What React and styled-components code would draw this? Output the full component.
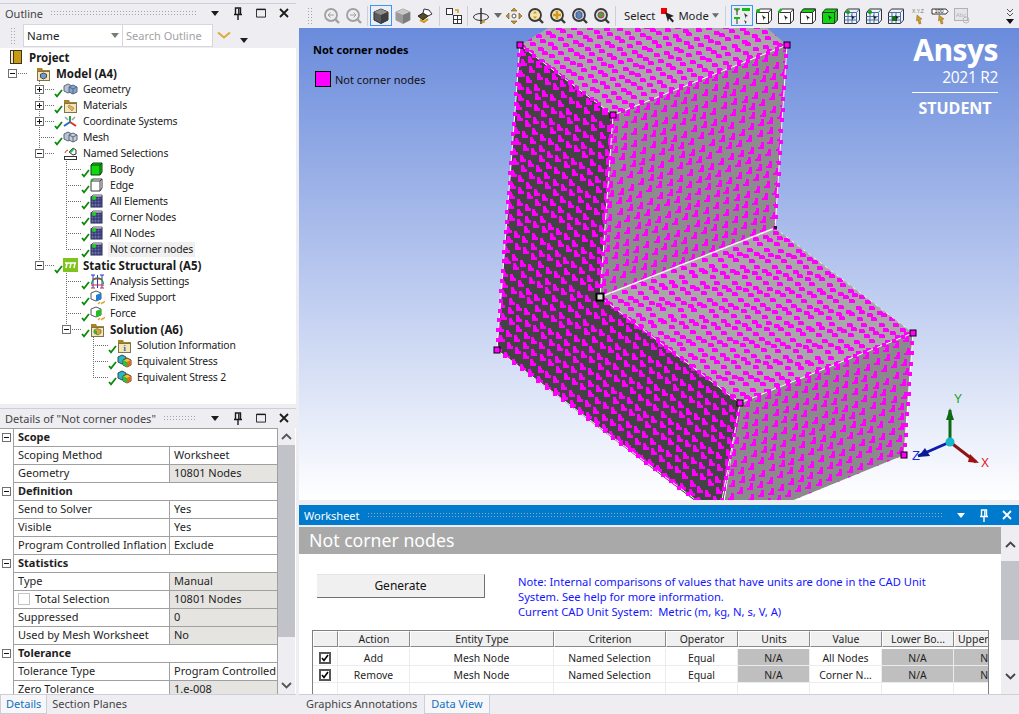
import styled, { createGlobalStyle } from 'styled-components';

const GlobalStyle = createGlobalStyle`
  html, body { margin: 0; padding: 0; background: #eeeef2; }
  body { font-family: "Noto Sans", "Liberation Sans", sans-serif; font-size: 11px; color: #1e1e1e; overflow: hidden; }
  * { box-sizing: border-box; }
`;

/* ---------- small icons ---------- */
const Check = () => (
  <svg width="9" height="9" viewBox="0 0 9 9"><path d="M1 5l2 2.4L8 1" fill="none" stroke="#0a8a0a" strokeWidth="1.800" /></svg>
);
const Twin = ({ tint = '#7da7d9' }) => (
  <svg width="15" height="14" viewBox="0 0 15 14">
    <path d="M1 4l4-2 4 2v5l-4 2-4-2z" fill="#b6c4d8" stroke="#5c6675" />
    <path d="M6 5l4-2 4 2v5l-4 2-4-2z" fill={tint} stroke="#5c6675" />
    <path d="M6 5l4 2 4-2M10 7v5" fill="none" stroke="#5c6675" />
  </svg>
);
const Folder = ({ children }) => (
  <svg width="15" height="15" viewBox="0 0 15 15">
    <path d="M1 2h5l1 2h7v2H1z" fill="#a9841f" />
    <rect x="1.500" y="5.500" width="12" height="9" fill="#f2e7b5" stroke="#7d7350" />
    {children}
  </svg>
);
const MeshCube = ({ dot = '#1bd41b' }) => (
  <svg width="13" height="14" viewBox="0 0 13 14">
    <rect x="1" y="3" width="11" height="10" fill="#6a6fb5" stroke="#23244f" />
    <path d="M1 3l2-2h9v2M4 3v10M7 3v10M10 3v10M1 6h11M1 9h11" fill="none" stroke="#23244f" strokeWidth=".8" />
    <circle cx="4" cy="4" r="2" fill={dot} />
  </svg>
);
const BodyIcon = () => (
  <svg width="13" height="14" viewBox="0 0 13 14">
    <path d="M1 3l2-2h9v9l-2 3H1z" fill="#10d810" stroke="#0d400d" /><path d="M1 3h9v10M10 3l2-2" fill="none" stroke="#0d400d" />
  </svg>
);
const EdgeIcon = () => (
  <svg width="13" height="14" viewBox="0 0 13 14">
    <path d="M1 3l2-2h9v9l-2 3H1z" fill="#fff" stroke="#3c3c3c" /><path d="M1 3h9v10M10 3l2-2" fill="none" stroke="#3c3c3c" />
    <path d="M1 3l2-2" stroke="#0db80d" strokeWidth="2" />
  </svg>
);
const ProjectIcon = () => (
  <svg width="14" height="15" viewBox="0 0 14 15">
    <rect x="1.500" y=".5" width="11" height="13" fill="#c99a10" stroke="#3c3320" /><rect x="1.500" y=".5" width="3" height="13" fill="#f4e8c2" stroke="#3c3320" />
  </svg>
);
const CsysIcon = () => (
  <svg width="14" height="15" viewBox="0 0 14 15">
    <path d="M7 8V2" stroke="#18a34a" strokeWidth="2" /><path d="M7 8L1 12" stroke="#2468c8" strokeWidth="2" /><path d="M7 8l6 4" stroke="#d8322a" strokeWidth="2" />
    <path d="M2 3l3 3M12 3L9 6" stroke="#9aa0a8" strokeWidth="1.500" />
  </svg>
);
const NamedIcon = () => (
  <svg width="15" height="15" viewBox="0 0 15 15">
    <path d="M6 6l4-4 3 2v4l-3 1z" fill="#fff" stroke="#333" /><path d="M6 6l4-4 1 2-3 3z" fill="#2fb84a" />
    <path d="M2 7a4 4 0 0 1 3-3" fill="none" stroke="#d32" />
    <rect x="1.500" y="10.500" width="12" height="3" fill="#fff" stroke="#333" />
  </svg>
);
const StaticIcon = () => (
  <svg width="15" height="14" viewBox="0 0 15 14">
    <rect width="15" height="14" fill="#7fc41c" /><path d="M2 5h11M4 5L3 10M8 5L7 10M12 5l-1 5" stroke="#fff" strokeWidth="1.500" fill="none" />
  </svg>
);
const AnalysisIcon = () => (
  <svg width="15" height="15" viewBox="0 0 15 15">
    <path d="M1 1h4M10 1h4M3 1v13M12 1v13M7.500 1v13" stroke="#2232d8" fill="none" />
    <path d="M1.500 10a6 6 0 0 1 12 0" stroke="#15a030" fill="none" strokeWidth="1.300" />
    <path d="M3 5h9M1 11h13M1 14h4M10 14h4" stroke="#d02828" fill="none" />
  </svg>
);
const SupportIcon = ({ face = '#1b7fe0', foot = '#d8ac3c' }) => (
  <svg width="15" height="15" viewBox="0 0 15 15">
    <path d="M6 1l5 2v6l-5 2-5-2V3z" fill="#fff" stroke="#555" /><path d="M6 5l5-2v6l-5 2z" fill={face} />
    <path d="M8 14l2-2M11 14l2-2M13 13l2-2" stroke={foot} strokeWidth="1.500" />
  </svg>
);
const StressIcon = () => (
  <svg width="15" height="14" viewBox="0 0 15 14">
    <path d="M1 3l4-2 4 2v5l-4 2-4-2z" fill="#28b8c8" stroke="#444" />
    <path d="M6 6l4-2 4 2v5l-4 2-4-2z" fill="#e8c818" stroke="#444" />
    <path d="M6 6l4 2v5l-4-2z" fill="#28c040" /><path d="M10 8l4-2v5l-4 2z" fill="#e86a18" />
  </svg>
);

const ICONS = {
  project: <ProjectIcon />,
  model: <Folder><path d="M7.500 7l3 1.300v3L7.500 13l-3-1.700v-3z" fill="#6d9bd2" stroke="#445" /></Folder>,
  geometry: <Twin />,
  materials: <Folder><path d="M6 7l5 3-2 3-4-4z" fill="#e2b27a" stroke="#a5763c" strokeWidth=".6" /></Folder>,
  csys: <CsysIcon />,
  mesh: <Twin tint="#c4cfde" />,
  named: <NamedIcon />,
  body: <BodyIcon />,
  edge: <EdgeIcon />,
  elements: <MeshCube />,
  nodes: <MeshCube />,
  static: <StaticIcon />,
  analysis: <AnalysisIcon />,
  support: <SupportIcon />,
  force: <SupportIcon face="#20c020" />,
  solution: <Folder><path d="M4 8l3-1.500L11 8v3l-3 2-4-2z" fill="#e3a528" stroke="#555" strokeWidth=".6" /><path d="M4 8l3 1v4l-3-2z" fill="#2bb04a" /></Folder>,
  info: <Folder><text x="7.500" y="13" fontSize="8" fontWeight="700" fill="#2a56c8" textAnchor="middle" fontFamily="Liberation Serif">i</text></Folder>,
  stress: <StressIcon />,
};

const Pin = () => (
  <svg width="10" height="13" viewBox="0 0 10 13"><path d="M2.500 1h5v6.500h-5zM1 7.500h8M5 8v5" fill="none" stroke="currentColor" strokeWidth="1.400" /><path d="M5.800 1.500v6" stroke="currentColor" strokeWidth="1.400" /></svg>
);
const CloseX = () => (
  <svg width="10" height="10" viewBox="0 0 10 10"><path d="M1 1l8 8M9 1l-8 8" stroke="currentColor" strokeWidth="1.800" /></svg>
);
const MaxBox = () => (
  <svg width="11" height="10" viewBox="0 0 11 10"><path d="M.5 1.200h10v8.300H.5z" fill="none" stroke="currentColor" /><path d="M.5 1h10" stroke="currentColor" strokeWidth="1.600" /></svg>
);
const DownTri = () => (
  <svg width="8" height="5" viewBox="0 0 8 5"><path d="M0 0h8L4 5z" fill="currentColor" /></svg>
);

/* ---------- toolbar icons ---------- */
const Glass = ({ ring = '#3a3a3a', fill = '#eef0f0', children }) => (
  <svg width="18" height="18" viewBox="0 0 18 18">
    <circle cx="8" cy="8" r="6" fill={fill} stroke={ring} strokeWidth="1.800" />
    <path d="M12.500 12.500L16 16" stroke={ring} strokeWidth="2.400" />
    {children}
  </svg>
);
const ShadedBox = ({ top = '#8f8f8f', left = '#5a5a5a', right = '#3f3f3f', stroke = '#2a2a2a' }) => (
  <svg width="18" height="18" viewBox="0 0 18 18">
    <path d="M9 2l7 3v8l-7 3.500L2 13V5z" fill={left} stroke={stroke} />
    <path d="M9 2l7 3-7 3-7-3z" fill={top} />
    <path d="M9 8l7-3v8l-7 3.500z" fill={right} />
  </svg>
);
const SelectCube = ({ mode }) => (
  <svg width="18" height="18" viewBox="0 0 18 18">
    <path d="M1.500 5.500l3-3.500h12v11l-3 3.500h-12z" fill={mode === 'body' ? '#10d810' : '#fff'} stroke="#333" />
    <path d="M1.500 5.500h12v11M13.500 5.500l3-3.500" fill="none" stroke="#333" />
    {mode === 'vertex' && <circle cx="3" cy="4" r="2" fill="#10b810" />}
    {mode === 'edge' && <path d="M1.500 5.500l3-3.500" stroke="#10b810" strokeWidth="2.500" />}
    {mode === 'face' && <path d="M1.500 5.500l3-3.500h12l-3 3.500z" fill="#10d810" stroke="#333" />}
    <path d="M7 8l4 3-2 .4L9 14z" fill="#222" />
  </svg>
);
const MeshSelect = ({ heavy }) => (
  <svg width="18" height="18" viewBox="0 0 18 18">
    <path d="M1.500 5.500l3-3.500h12v11l-3 3.500h-12z" fill="#eef2fa" stroke="#333" />
    <path d="M1.500 5.500h12v11M13.500 5.500l3-3.500M5 5.500v11M9 5.500v11M1.500 9.500h12M1.500 13h12" fill="none" stroke="#4a70a8" />
    {heavy ? <rect x="5" y="9" width="5" height="5" fill="#157015" /> : <circle cx="5" cy="5" r="2" fill="#15a015" />}
    <path d="M8 8l4 3-2 .4L10 14z" fill="#222" />
  </svg>
);

const Toolbar = styled.div`
  height: 25px;
  display: flex;
  align-items: center;
  background: #eeeef2;
  padding-left: 8px;
`;
const Grip = styled.span`
  width: ${p => p.$w || 6}px;
  height: ${p => p.$h || 18}px;
  flex: ${p => (p.$grow ? 1 : 'none')};
  background-image: radial-gradient(#a4a4ae 0.7px, transparent 0.8px);
  background-size: 3px 3px;
`;
const ToolSpacer = styled.span`
  width: 8px;
  flex: none;
`;
const ToolButton = styled.span`
  width: ${p => p.$w || 22}px;
  height: 21px;
  flex: none;
  display: flex;
  align-items: center;
  justify-content: center;
  border: 1px solid ${p => (p.$active ? '#3399ff' : 'transparent')};
  opacity: ${p => (p.$dim ? 0.5 : 1)};
  color: #6a6a6a;
`;
const ToolSep = styled.span`
  width: 1px;
  height: 20px;
  flex: none;
  background: #ccced8;
  margin: 0 ${p => p.$m ?? 3}px;
`;
const ToolText = styled.span`
  font-size: 11.300px;
  color: #1e1e1e;
  padding: 0 ${p => p.$pad ?? 4}px 1px;
`;
const Overflow = styled.span`
  margin-left: auto;
  margin-right: 5px;
  display: flex;
  flex-direction: column;
  align-items: center;
  gap: 2px;
  color: #111;
`;

/* ---------- layout ---------- */
const Shell = styled.div`
  width: 1019px;
  height: 714px;
  padding-top: 3px;
  display: grid;
  grid-template-columns: 299px 720px;
  overflow: hidden;
`;
const LeftColumn = styled.div`
  display: flex;
  flex-direction: column;
  padding-right: 3px;
  min-height: 0;
`;
const RightColumn = styled.div`
  display: flex;
  flex-direction: column;
  min-height: 0;
`;
const PanelHead = styled.div`
  height: ${p => p.$h || 20}px;
  flex: none;
  display: flex;
  align-items: center;
  gap: 7px;
  padding: 0 7px 1px 5px;
  font-size: 11px;
  color: ${p => (p.$blue ? '#fff' : '#444')};
  background: ${p => (p.$blue ? '#007acc' : '#eeeef2')};
  border-top: 1px solid ${p => (p.$blue ? '#007acc' : '#ccced8')};
`;
const HeadTool = styled.span`
  display: flex;
  width: 10px;
  justify-content: center;
  margin-left: 6px;
  color: ${p => (p.$blue ? '#fff' : '#1b1b1b')};
`;
const OutlinePanel = styled.section`
  height: 401px;
  flex: none;
  display: flex;
  flex-direction: column;
`;
const SearchRow = styled.div`
  height: 25px;
  flex: none;
  display: flex;
  align-items: center;
  padding-left: 10px;
`;
const NameCombo = styled.div`
  width: 100px;
  height: 23px;
  margin-left: 7px;
  display: flex;
  align-items: center;
  justify-content: space-between;
  padding: 0 3px;
  font-size: 11.500px;
  background: #fff;
  border: 1px solid #d6d6dc;
  color: #1e1e1e;
  & > svg { color: #7a7a7a; }
`;
const SearchBox = styled.div`
  width: 90px;
  height: 23px;
  display: flex;
  align-items: center;
  padding-left: 3px;
  font-size: 11px;
  background: #fff;
  border: 1px solid #d6d6dc;
  border-left: 0;
  color: #a2a2a2;
  white-space: nowrap;
`;
const Chevron = styled.span`
  display: flex;
  margin-left: 4px;
  margin-right: 9px;
`;
const MenuTri = styled.span`
  display: flex;
  margin-top: 10px;
`;
const TreeBox = styled.div`
  flex: 1;
  background: #fff;
  padding-top: 1px;
  overflow: hidden;
`;
const Row = styled.div`
  height: 16px;
  display: flex;
  align-items: center;
`;
const dots = 'repeating-linear-gradient';
const Guide = styled.span`
  width: 27px;
  height: 16px;
  flex: none;
  position: relative;
  &::before {
    content: '';
    display: ${p => (p.$kind === 'T' || p.$kind === '|' || p.$kind === 'L' ? 'block' : 'none')};
    position: absolute;
    left: 12px;
    top: 0;
    width: 1px;
    height: ${p => (p.$kind === 'L' ? 8 : 16)}px;
    background: ${dots}(to bottom, #6e6e6e 0 1px, transparent 1px 2px);
  }
  &::after {
    content: '';
    display: ${p => (p.$kind === 'T' || p.$kind === 'L' || p.$kind === '-' ? 'block' : 'none')};
    position: absolute;
    left: 12px;
    top: 8px;
    width: 15px;
    height: 1px;
    background: ${dots}(to right, #6e6e6e 0 1px, transparent 1px 2px);
  }
`;
const Expander = styled.span`
  position: absolute;
  z-index: 1;
  left: ${p => p.$left ?? 8}px;
  top: 4px;
  width: 9px;
  height: 9px;
  background: #fff;
  border: 1px solid #707070;
  &::before {
    content: '';
    position: absolute;
    left: 1px;
    top: 3px;
    width: 5px;
    height: 1px;
    background: #111;
  }
  &::after {
    content: '';
    display: ${p => (p.$open ? 'none' : 'block')};
    position: absolute;
    left: 3px;
    top: 1px;
    width: 1px;
    height: 5px;
    background: #111;
  }
`;
const CheckSlot = styled.span`
  width: 9px;
  height: 16px;
  flex: none;
  display: flex;
  align-items: flex-end;
  position: relative;
  top: 1px;
`;
const TreeIcon = styled.span`
  width: 15px;
  height: 16px;
  flex: none;
  display: flex;
  align-items: center;
`;
const TreeLabel = styled.span`
  margin-left: 3px;
  padding: 0 2px;
  font-size: ${p => (p.$bold ? 11.500 : 10.400)}px;
  letter-spacing: ${p => (p.$bold ? 0 : -0.15)}px;
  line-height: 15px;
  white-space: nowrap;
  font-weight: ${p => (p.$bold ? 700 : 400)};
  background: ${p => (p.$sel ? '#f0f0f0' : 'transparent')};
  color: #1a1a1a;
`;

/* ---------- details ---------- */
const DetailsPanel = styled.section`
  flex: 1;
  margin-top: 4px;
  display: flex;
  flex-direction: column;
  min-height: 0;
`;
const DetailsBody = styled.div`
  height: 266px;
  flex: none;
  display: flex;
  overflow: hidden;
  background: #fff;
`;
const DetailsTable = styled.div`
  width: 278px;
  flex: none;
  overflow: hidden;
  border-top: 1px solid #a0a0a0;
`;
const DetailRow = styled.div`
  height: 18px;
  display: flex;
  position: relative;
`;
const Gutter = styled.span`
  width: 13px;
  flex: none;
  position: relative;
  background: #fff;
`;
const Cell = styled.span`
  flex: none;
  width: ${p => p.$w}px;
  display: flex;
  align-items: center;
  gap: 5px;
  padding: 0 0 2px ${p => p.$pad ?? 4}px;
  font-size: 11px;
  white-space: nowrap;
  overflow: hidden;
  font-weight: ${p => (p.$bold ? 700 : 400)};
  background: ${p => (p.$gray ? '#e5e4e1' : '#fff')};
  border-left: 1px solid #a0a0a0;
  border-right: ${p => (p.$end ? '1px solid #a0a0a0' : '0')};
  border-bottom: 1px solid #a0a0a0;
`;
const TinyCheck = styled.span`
  width: 12px;
  height: 12px;
  flex: none;
  background: #fff;
  border: 1px solid #c4c4c4;
`;
const VScroll = styled.div`
  flex: none;
  width: ${p => p.$w}px;
  display: flex;
  flex-direction: column;
  align-items: center;
  background: #eeeef2;
`;
const ScrollBtn = styled.span`
  height: ${p => p.$h}px;
  flex: none;
  display: flex;
  align-items: center;
  justify-content: center;
`;
const ScrollTrack = styled.span`
  flex: 1;
  width: 100%;
  min-height: 0;
  display: flex;
  flex-direction: column;
`;
const ScrollThumb = styled.span`
  height: ${p => p.$h}px;
  flex: none;
  background: #c2c3c9;
`;
const TabBar = styled.div`
  height: 20px;
  flex: none;
  display: flex;
  background: #eeeef2;
  border-top: 1px solid #ccced8;
`;
const Tab = styled.span`
  display: flex;
  align-items: center;
  padding: 0 ${p => p.$x ?? 6}px 1px;
  font-size: 11px;
  color: ${p => (p.$active ? '#0e70c0' : '#444')};
  background: ${p => (p.$active ? '#f7f7f9' : 'transparent')};
  border: 1px solid ${p => (p.$active ? '#ccced8' : 'transparent')};
  border-top: 0;
`;

/* ---------- viewport ---------- */
const Viewport = styled.div`
  height: 472px;
  flex: none;
  position: relative;
  overflow: hidden;
  background: linear-gradient(#6a8bdc, #ffffff);
`;
const ModelSvg = styled.svg`
  display: block;
`;
const Legend = styled.div`
  position: absolute;
  left: 14px;
  top: 14px;
  display: flex;
  flex-direction: column;
  gap: 14px;
`;
const LegendTitle = styled.div`
  font-size: 11px;
  font-weight: 700;
  color: #000;
`;
const LegendItem = styled.div`
  display: flex;
  align-items: center;
  gap: 4px;
  font-size: 11px;
  color: #111;
  padding-left: 2px;
`;
const Swatch = styled.span`
  width: 16px;
  height: 16px;
  background: #ff00ff;
  border: 1px solid #000;
`;
const Brand = styled.div`
  position: absolute;
  right: 21px;
  top: 6px;
  width: 86px;
  color: #fff;
  display: flex;
  flex-direction: column;
  align-items: flex-end;
`;
const BrandName = styled.div`
  font-family: "Open Sans", sans-serif;
  font-weight: 700;
  font-size: 30px;
  line-height: 32px;
  letter-spacing: -.5px;
`;
const BrandYear = styled.div`
  margin-top: 1px;
  font-family: "Open Sans", sans-serif;
  font-weight: 400;
  font-size: 15.500px;
  line-height: 20px;
  letter-spacing: -.3px;
`;
const BrandLine = styled.div`
  width: 100%;
  height: 1px;
  margin: 5px 0 5px;
  background: #fff;
`;
const BrandEdition = styled.div`
  width: 100%;
  text-align: center;
  font-family: "Open Sans", sans-serif;
  font-weight: 700;
  font-size: 16px;
  line-height: 20px;
`;

/* ---------- worksheet ---------- */
const Worksheet = styled.section`
  height: 189px;
  flex: none;
  margin-top: 5px;
  display: flex;
  flex-direction: column;
`;
const WorksheetMain = styled.div`
  flex: 1;
  margin-top: 2px;
  min-height: 0;
  display: flex;
  background: #fff;
`;
const WorksheetContent = styled.div`
  width: 702px;
  flex: none;
  overflow: hidden;
`;
const SheetTitle = styled.h2`
  margin: 0;
  height: 27px;
  padding-left: 10px;
  background: #a9a9a9;
  color: #fff;
  font-weight: 400;
  font-size: 17.700px;
  line-height: 26px;
  font-family: "Noto Sans", sans-serif;
`;
const GenerateRow = styled.div`
  display: flex;
  padding: 20px 0 0 18px;
  height: 76px;
`;
const GenerateButton = styled.button`
  width: 168px;
  height: 24px;
  padding: 0 0 2px;
  background: #f0f0f0;
  border: 0;
  border-top: 1px solid #e4e4e4;
  border-right: 1px solid #707070;
  border-bottom: 1px solid #707070;
  font: 12px "Noto Sans", sans-serif;
  color: #111;
`;
const Note = styled.p`
  margin: 0 0 0 33px;
  color: #1414ff;
  font-size: 11.200px;
  line-height: 15px;
`;
const GridClip = styled.div`
  margin-left: 13px;
  width: 677px;
  overflow: hidden;
  border-top: 1px solid #7f7f7f;
  border-left: 1px solid #7f7f7f;
  border-right: 1px solid #7f7f7f;
`;
const CritGrid = styled.div`
  display: grid;
  grid-template-columns: 25px 72px 144px 112px 72px 72px 72px 72px 72px;
  grid-template-rows: 18px;
  grid-auto-rows: 17px;
  width: 713px;
  font-size: 10.400px;
`;
const HeadCell = styled.span`
  height: 16px;
  display: block;
  text-align: ${p => (p.$left ? 'left' : 'center')};
  padding-left: ${p => (p.$left ? 3 : 0)}px;
  line-height: 15px;
  white-space: nowrap;
  overflow: hidden;
  background: #f0f0f0;
  border-top: 1px solid #fff;
  border-left: 1px solid #fff;
  border-right: 1px solid #8a8a8a;
  border-bottom: 1px solid #8a8a8a;
`;
const BodyCell = styled.span`
  display: flex;
  align-items: center;
  justify-content: center;
  padding-top: 2px;
  white-space: nowrap;
  background: ${p => (p.$na ? '#bfbfbf' : '#fff')};
  border-right: 1px solid #ececec;
  border-bottom: 1px solid #ececec;
`;
const CriteriaRow = styled.div`
  display: contents;
`;
const CheckBoxMark = styled.span`
  width: 12px;
  height: 12px;
  display: flex;
  background: #fff;
  border: 2px solid #555;
`;

/* ---------- the 3D part ---------- */
const nodeShape = {
  top: (x, y) => `M${x} ${y}h5v1h1v3h-6z`,
  right: (x, y) => `M${x} ${y + 7}v-2h2v-2h1v-3h3v7z`,
  left: (x, y) => `M${x} ${y}h3v2h1v2h2v3h-6z`,
  edge: (x, y) => `M${x} ${y}h4v4h-4z`,
};

// lay the nodes of a face on a skewed lattice, staggered a little like a real mesh
const latticePath = (shape, [ox, oy], [ux, uy], [vx, vy], nu, nv) => {
  let d = '';
  for (let i = 0; i < nu; i++) {
    for (let j = 0; j < nv; j++) {
      const jx = Math.round(Math.sin(i * 12.9 + j * 78.2) * 1.2);
      const jy = Math.round(Math.cos(i * 39.3 + j * 11.1) * 1.2);
      const x = Math.round(ox + i * ux + j * vx) + jx;
      const y = Math.round(oy + i * uy + j * vy) + jy;
      d += nodeShape[shape](x, y);
    }
  }
  return d;
};

const edgePath = ([ax, ay], [bx, by], n) => {
  let d = '';
  for (let i = 0; i <= n; i++) {
    d += nodeShape.edge(Math.round(ax + ((bx - ax) * i) / n) - 2, Math.round(ay + ((by - ay) * i) / n) - 2);
  }
  return d;
};

const FACES = [
  {
    id: 'dark', fill: '#434343',
    clip: '520,45 613,115 600,297 740,403 720,520 497,350',
    path: latticePath('left', [490, 14], [8, 6], [-.9, 11], 34, 46),
  },
  {
    id: 'wall', fill: '#8c8c8c',
    clip: '613,115 787,45 775,228 600,297',
    path: latticePath('right', [603, 118], [10, -4], [-.8, 11], 20, 18),
  },
  {
    id: 'roof', fill: '#a8a8a8',
    clip: '520,45 548,28 767,28 787,45 613,115',
    path: latticePath('top', [608, 112], [10, -4], [-5.8, -4.400], 20, 18),
  },
  {
    id: 'step', fill: '#a8a8a8',
    clip: '600,297 775,228 913,333 740,403',
    path: latticePath('top', [596, 294], [10, -4], [5.8, 4.400], 20, 26),
  },
  {
    id: 'front', fill: '#8a8a8a',
    clip: '740,403 913,333 904,455 720,530',
    path: latticePath('right', [734, 404], [10, -4], [-.8, 11], 20, 12),
  },
];

const EDGES = [
  [[520, 45], [497, 350], 31],
  [[520, 45], [613, 115], 13],
  [[613, 115], [787, 45], 18],
  [[787, 45], [775, 228], 17],
  [[613, 115], [600, 297], 17],
  [[600, 297], [740, 403], 17],
  [[740, 403], [913, 333], 18],
  [[913, 333], [904, 455], 12],
  [[740, 403], [722, 500], 9],
  [[497, 350], [696, 500], 24],
];

const CORNERS = [[520, 45], [787, 45], [613, 115], [497, 350], [913, 333], [740, 403], [904, 455]];

const Triad = () => (
  <g>
    <path d="M950 442L918 456" stroke="#0c1fa8" strokeWidth="3" />
    <path d="M925 448l-7 9 12-1z" fill="#0a1a90" />
    <path d="M950 442V410" stroke="#0d6a12" strokeWidth="3" />
    <path d="M954 420l-4-12-4 12z" fill="#0d6a12" />
    <path d="M950 442l26 20" stroke="#8c1414" strokeWidth="3" />
    <path d="M970 454l9 9-11-1z" fill="#a01010" />
    <circle cx="950" cy="442" r="4.500" fill="#19b5c9" />
    <text x="958" y="403" fontSize="12" fill="#15a015" textAnchor="middle" fontFamily="Liberation Sans">Y</text>
    <text x="985" y="467" fontSize="12" fill="#e01414" textAnchor="middle" fontFamily="Liberation Sans">X</text>
    <text x="916" y="460" fontSize="13" fill="#1a28e0" textAnchor="middle" fontFamily="Liberation Sans">Z</text>
  </g>
);

const Model = () => (
  <ModelSvg width="720" height="472" viewBox="299 28 720 472">
    <defs>
      {FACES.map(f => (
        <clipPath id={f.id} key={f.id}><polygon points={f.clip} /></clipPath>
      ))}
    </defs>
    {FACES.map(f => (
      <g key={f.id}>
        <polygon points={f.clip} fill={f.fill} />
        <path d={f.path} fill="#ff00ff" clipPath={`url(#${f.id})`} />
      </g>
    ))}
    <path d="M600 297L775 228" stroke="#f4f4f4" strokeWidth="1.500" />
    <path d="M775 228L913 333" stroke="#f4f4f4" strokeWidth="1" strokeDasharray="3 4" />
    {EDGES.map(([a, b, n], i) => (
      <g key={i}>
        <path d={`M${a[0]} ${a[1]}L${b[0]} ${b[1]}`} stroke="#fff" strokeWidth="1" />
        <path d={edgePath(a, b, n)} fill="#ff00ff" />
      </g>
    ))}
    {CORNERS.map(([x, y]) => (
      <rect key={`${x}-${y}`} x={x - 3} y={y - 3} width="6" height="6" fill="#ff00ff" stroke="#000" />
    ))}
    <rect x="596.500" y="293.500" width="7" height="7" fill="#ddd" stroke="#000" strokeWidth="2" />
    <rect x="774" y="226" width="3" height="3" fill="#222" />
    <Triad />
  </ModelSvg>
);

/* ---------- data ---------- */
const TREE = [
  { label: 'Project', lines: '', icon: 'project', bold: true, noCheck: true },
  { label: 'Model (A4)', lines: '-', icon: 'model', bold: true, exp: 'open', noCheck: true },
  { label: 'Geometry', lines: '.T', icon: 'geometry', exp: 'closed' },
  { label: 'Materials', lines: '.T', icon: 'materials', exp: 'closed' },
  { label: 'Coordinate Systems', lines: '.T', icon: 'csys', exp: 'closed' },
  { label: 'Mesh', lines: '.T', icon: 'mesh' },
  { label: 'Named Selections', lines: '.T', icon: 'named', exp: 'open', noCheck: true },
  { label: 'Body', lines: '.|T', icon: 'body' },
  { label: 'Edge', lines: '.|T', icon: 'edge' },
  { label: 'All Elements', lines: '.|T', icon: 'elements' },
  { label: 'Corner Nodes', lines: '.|T', icon: 'nodes' },
  { label: 'All Nodes', lines: '.|T', icon: 'nodes' },
  { label: 'Not corner nodes', lines: '.|L', icon: 'nodes', sel: true },
  { label: 'Static Structural (A5)', lines: '.L', icon: 'static', bold: true, exp: 'open' },
  { label: 'Analysis Settings', lines: '..T', icon: 'analysis' },
  { label: 'Fixed Support', lines: '..T', icon: 'support' },
  { label: 'Force', lines: '..T', icon: 'force' },
  { label: 'Solution (A6)', lines: '..L', icon: 'solution', bold: true, exp: 'open' },
  { label: 'Solution Information', lines: '...T', icon: 'info' },
  { label: 'Equivalent Stress', lines: '...T', icon: 'stress' },
  { label: 'Equivalent Stress 2', lines: '...L', icon: 'stress' },
];

const DETAILS = [
  { section: 'Scope' },
  { k: 'Scoping Method', v: 'Worksheet' },
  { k: 'Geometry', v: '10801 Nodes', gray: true },
  { section: 'Definition' },
  { k: 'Send to Solver', v: 'Yes' },
  { k: 'Visible', v: 'Yes' },
  { k: 'Program Controlled Inflation', v: 'Exclude' },
  { section: 'Statistics' },
  { k: 'Type', v: 'Manual', gray: true },
  { k: 'Total Selection', v: '10801 Nodes', gray: true, box: true },
  { k: 'Suppressed', v: '0', gray: true },
  { k: 'Used by Mesh Worksheet', v: 'No', gray: true },
  { section: 'Tolerance' },
  { k: 'Tolerance Type', v: 'Program Controlled' },
  { k: 'Zero Tolerance', v: '1.e-008', gray: true },
];

const HEADERS = ['', 'Action', 'Entity Type', 'Criterion', 'Operator', 'Units', 'Value', 'Lower Bo...', 'Upper Bound'];
const CRITERIA = [
  ['Add', 'Mesh Node', 'Named Selection', 'Equal', 'N/A', 'All Nodes', 'N/A', 'N/A'],
  ['Remove', 'Mesh Node', 'Named Selection', 'Equal', 'N/A', 'Corner N...', 'N/A', 'N/A'],
];

const PanelTools = ({ blue, max = true }) => (
  <>
    <HeadTool $blue={blue}><DownTri /></HeadTool>
    <HeadTool $blue={blue}><Pin /></HeadTool>
    {max && <HeadTool $blue={blue}><MaxBox /></HeadTool>}
    <HeadTool $blue={blue}><CloseX /></HeadTool>
  </>
);

const TreeRow = ({ item }) => (
  <Row>
    {[...item.lines].map((kind, i) => (
      <Guide key={i} $kind={kind}>
        {i === item.lines.length - 1 && item.exp && <Expander $open={item.exp === 'open'} />}
      </Guide>
    ))}
    <CheckSlot>{!item.noCheck && <Check />}</CheckSlot>
    <TreeIcon>{ICONS[item.icon]}</TreeIcon>
    <TreeLabel $bold={item.bold} $sel={item.sel}>{item.label}</TreeLabel>
  </Row>
);

const ScrollArrow = ({ up, color = '#555' }) => (
  <svg width="11" height="7" viewBox="0 0 11 7">
    <path d={up ? 'M1 6l4.500-4.500L10 6' : 'M1 1l4.500 4.500L10 1'} fill="none" stroke={color} strokeWidth="1.800" />
  </svg>
);

const MainToolbar = () => (
  <Toolbar>
    <Grip />
    <ToolSpacer />
    <ToolButton $dim><Glass ring="#555" fill="#eee"><path d="M11 8H5M7.500 5.500L5 8l2.500 2.500" stroke="#555" fill="none" /></Glass></ToolButton>
    <ToolButton $dim><Glass ring="#555" fill="#eee"><path d="M5 8h6M8.500 5.500L11 8l-2.500 2.500" stroke="#555" fill="none" /></Glass></ToolButton>
    <ToolSep $m={2} />
    <ToolButton $active><ShadedBox /></ToolButton>
    <ToolButton><ShadedBox top="#c8c8c8" left="#9a9a9a" right="#7c7c7c" stroke="#9a9a9a" /></ToolButton>
    <ToolButton>
      <svg width="18" height="18" viewBox="0 0 18 18">
        <path d="M2 9l5-3 5 3-5 4z" fill="#5a4a20" stroke="#222" /><path d="M8 2l5 1 3 4-4 2-5-3z" fill="#fff" stroke="#333" />
        <path d="M4 13l4 2 4-3" fill="none" stroke="#d09a20" strokeWidth="2" />
      </svg>
    </ToolButton>
    <ToolSep $m={3} />
    <ToolButton>
      <svg width="18" height="18" viewBox="0 0 18 18">
        <rect x="1.500" y="1.500" width="6" height="6" fill="#fff" stroke="#333" /><rect x="8.500" y="8.500" width="8" height="8" fill="#fff" stroke="#333" />
        <path d="M8.500 12.500h8M12.500 8.500v8" stroke="#333" /><path d="M10 3l3 0v3" fill="none" stroke="#d09a20" strokeWidth="1.500" />
      </svg>
    </ToolButton>
    <ToolSep $m={2} />
    <ToolButton>
      <svg width="18" height="18" viewBox="0 0 18 18">
        <ellipse cx="9" cy="10" rx="7.500" ry="3.500" fill="none" stroke="#333" />
        <path d="M9 1v16" stroke="#333" strokeWidth="1.500" /><path d="M13 15l-3 1 1-3" fill="#d09a20" stroke="#d09a20" />
      </svg>
    </ToolButton>
    <ToolButton $w={11}><DownTri /></ToolButton>
    <ToolButton>
      <svg width="18" height="18" viewBox="0 0 18 18">
        <path d="M9 1l3 3H6zM9 17l-3-3h6zM1 9l3-3v6zM17 9l-3 3V6z" fill="#d09a20" stroke="#6a5010" strokeWidth=".6" />
        <circle cx="9" cy="9" r="2" fill="#fff" stroke="#555" />
      </svg>
    </ToolButton>
    <ToolButton><Glass fill="#f4e4b0"><path d="M8 4l2 2.500H6zM8 12l-2-2.500h4z" fill="#d09a20" /></Glass></ToolButton>
    <ToolButton><Glass fill="#f4e4b0"><path d="M8 4v8M4 8h8" stroke="#d09a20" strokeWidth="2.500" /></Glass></ToolButton>
    <ToolButton><Glass fill="#cfd6e6"><path d="M5 6l3-2 3 2v4l-3 2-3-2z" fill="#5c82c0" stroke="#333" strokeWidth=".6" /></Glass></ToolButton>
    <ToolButton><Glass fill="#cfd6e6"><circle cx="8" cy="8" r="3" fill="#2fae4a" stroke="#d33" /></Glass></ToolButton>
    <ToolSep $m={2} />
    <ToolText $pad={6}>Select</ToolText>
    <svg width="15" height="15" viewBox="0 0 15 15">
      <rect width="6" height="6" fill="#f00000" /><path d="M4 4l9 4-3.500 1.200L13 13l-1.500 1.500L8 10.500 7 14z" fill="#222" />
    </svg>
    <ToolText $pad={2}>Mode</ToolText>
    <ToolButton $w={9}><DownTri /></ToolButton>
    <ToolSep $m={5} />
    <ToolButton $active>
      <svg width="18" height="18" viewBox="0 0 18 18">
        <path d="M1 2h6M4 2v6M1 11h6M4 11v6" stroke="#333" /><rect x="9" y="1" width="8" height="3" fill="#10c010" /><rect x="1" y="10" width="6" height="2" fill="#10c010" />
        <circle cx="4" cy="3" r="1.500" fill="#10b010" /><path d="M11 6l4 3-2 .4 0 2.600zM11 13l3 2-1 .4v2z" fill="#333" />
      </svg>
    </ToolButton>
    <ToolButton><SelectCube mode="vertex" /></ToolButton>
    <ToolButton><SelectCube mode="edge" /></ToolButton>
    <ToolButton><SelectCube mode="face" /></ToolButton>
    <ToolButton><SelectCube mode="body" /></ToolButton>
    <ToolButton><MeshSelect /></ToolButton>
    <ToolButton><MeshSelect /></ToolButton>
    <ToolButton><MeshSelect heavy /></ToolButton>
    <ToolButton>
      <svg width="18" height="18" viewBox="0 0 18 18">
        <text x="9" y="6" fontSize="5" fill="#777" textAnchor="middle" fontFamily="Liberation Sans">X.Y.Z</text>
        <path d="M8 8l5 4-2 .5 1 4-2 .5-1-4-1.500 1z" fill="#d09a20" stroke="#6a5010" strokeWidth=".4" />
      </svg>
    </ToolButton>
    <ToolButton>
      <svg width="18" height="18" viewBox="0 0 18 18">
        <path d="M1 2h14l2 2.500L15 7H1z" fill="#fff" stroke="#333" />
        <text x="8" y="6.200" fontSize="5.500" fill="#111" textAnchor="middle" fontFamily="Liberation Sans">100</text>
        <path d="M8 8l5 4-2 .5 1 4-2 .5-1-4-1.500 1z" fill="#d09a20" stroke="#6a5010" strokeWidth=".4" />
      </svg>
    </ToolButton>
    <ToolButton $dim>
      <svg width="18" height="18" viewBox="0 0 18 18">
        <rect x="1.500" y="1.500" width="13" height="12" fill="#ddd" stroke="#777" />
        <text x="8" y="10" fontSize="6" fill="#777" textAnchor="middle" fontFamily="Liberation Sans">Abc</text>
        <circle cx="13" cy="13" r="3" fill="none" stroke="#888" />
      </svg>
    </ToolButton>
    <Overflow>
      <svg width="8" height="9" viewBox="0 0 8 9"><path d="M1 1l3 3 3-3M1 5l3 3 3-3" fill="none" stroke="#555" /></svg>
      <DownTri />
    </Overflow>
  </Toolbar>
);

export default function App() {
  return (
    <Shell>
      <GlobalStyle />
      <LeftColumn>
        <OutlinePanel>
          <PanelHead>
            Outline
            <Grip $h={6} $grow />
            <PanelTools />
          </PanelHead>
          <SearchRow>
            <Grip $h={18} />
            <NameCombo>Name <DownTri /></NameCombo>
            <SearchBox>Search Outline</SearchBox>
            <Chevron>
              <svg width="14" height="9" viewBox="0 0 14 9"><path d="M1 1.500l6 5 6-5" fill="none" stroke="#d9ab3a" strokeWidth="2" /></svg>
            </Chevron>
            <MenuTri><DownTri /></MenuTri>
          </SearchRow>
          <TreeBox>
            {TREE.map(item => <TreeRow key={item.label} item={item} />)}
          </TreeBox>
        </OutlinePanel>

        <DetailsPanel>
          <PanelHead>
            Details of "Not corner nodes"
            <Grip $h={6} $grow />
            <PanelTools />
          </PanelHead>
          <DetailsBody>
            <DetailsTable>
              {DETAILS.map(d => (
                <DetailRow key={d.section || d.k}>
                  <Gutter>{d.section && <Expander $open $left={2} />}</Gutter>
                  {d.section ? (
                    <Cell $w={265} $bold $end>{d.section}</Cell>
                  ) : (
                    <>
                      <Cell $w={156}>{d.box && <TinyCheck />}{d.k}</Cell>
                      <Cell $w={109} $gray={d.gray} $end>{d.v}</Cell>
                    </>
                  )}
                </DetailRow>
              ))}
            </DetailsTable>
            <VScroll $w={17}>
              <ScrollBtn $h={17}><ScrollArrow up /></ScrollBtn>
              <ScrollTrack><ScrollThumb $h={192} /></ScrollTrack>
              <ScrollBtn $h={17}><ScrollArrow /></ScrollBtn>
            </VScroll>
          </DetailsBody>
          <TabBar>
            <Tab $active $x={5}>Details</Tab>
            <Tab $x={4}>Section Planes</Tab>
          </TabBar>
        </DetailsPanel>
      </LeftColumn>

      <RightColumn>
        <MainToolbar />
        <Viewport>
          <Model />
          <Legend>
            <LegendTitle>Not corner nodes</LegendTitle>
            <LegendItem><Swatch />Not corner nodes</LegendItem>
          </Legend>
          <Brand>
            <BrandName>Ansys</BrandName>
            <BrandYear>2021 R2</BrandYear>
            <BrandLine />
            <BrandEdition>STUDENT</BrandEdition>
          </Brand>
        </Viewport>

        <Worksheet>
          <PanelHead $blue>
            Worksheet
            <Grip $h={6} $grow />
            <PanelTools blue max={false} />
          </PanelHead>
          <WorksheetMain>
            <WorksheetContent>
              <SheetTitle>Not corner nodes</SheetTitle>
              <GenerateRow>
                <GenerateButton>Generate</GenerateButton>
                <Note>
                  Note: Internal comparisons of values that have units are done in the CAD Unit<br />
                  System. See help for more information.<br />
                  Current CAD Unit System:&nbsp; Metric (m, kg, N, s, V, A)
                </Note>
              </GenerateRow>
              <GridClip>
                <CritGrid>
                  {HEADERS.map((h, i) => <HeadCell key={i} $left={i === 8}>{h}</HeadCell>)}
                  {CRITERIA.map(row => (
                    <CriteriaRow key={row[0]}>
                      <BodyCell>
                        <CheckBoxMark>
                          <svg width="8" height="8" viewBox="0 0 8 8"><path d="M1 4l2 2.500L7 1" fill="none" stroke="#000" strokeWidth="1.600" /></svg>
                        </CheckBoxMark>
                      </BodyCell>
                      {row.map((c, i) => <BodyCell key={i} $na={c === 'N/A'}>{c}</BodyCell>)}
                    </CriteriaRow>
                  ))}
                  {Array.from({ length: 9 }, (_, i) => <BodyCell key={i} />)}
                </CritGrid>
              </GridClip>
            </WorksheetContent>
            <VScroll $w={18}>
              <ScrollBtn $h={34}><ScrollArrow up color="#444" /></ScrollBtn>
              <ScrollTrack><ScrollThumb $h={79} /></ScrollTrack>
              <ScrollBtn $h={36}><ScrollArrow color="#444" /></ScrollBtn>
            </VScroll>
          </WorksheetMain>
        </Worksheet>
        <TabBar>
          <Tab>Graphics Annotations</Tab>
          <Tab $active>Data View</Tab>
        </TabBar>
      </RightColumn>
    </Shell>
  );
}
